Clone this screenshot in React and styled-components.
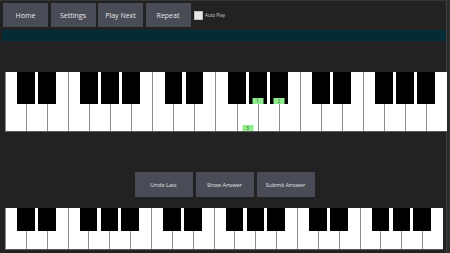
import React from "react";
import styled, { createGlobalStyle } from "styled-components";

const GlobalStyle = createGlobalStyle`
  html, body {
    margin: 0;
    padding: 0;
    background: #1c1c1c;
  }
`;

const NOTES = ["C", "D", "E", "F", "G", "A", "B"];
const HAS_SHARP = { C: true, D: true, F: true, G: true, A: true };

class App extends React.Component {
  render() {
    return (
      <>
        <GlobalStyle />
        <Window>
          <Toolbar>
            <ToolButton>Home</ToolButton>
            <ToolButton>Settings</ToolButton>
            <ToolButton>Play Next</ToolButton>
            <ToolButton>Repeat</ToolButton>
            <CheckLabel>
              <CheckBox />
              Auto Play
            </CheckLabel>
          </Toolbar>
          <StatusBar />
          <Keyboard
            height={60}
            top={31}
            rightGap={0}
            markers={{ "1:G#": "1", "1:A#": "2", "1:G": "3" }}
          />
          <ActionRow>
            <ActionButton>Undo Last</ActionButton>
            <ActionButton>Show Answer</ActionButton>
            <ActionButton>Submit Answer</ActionButton>
          </ActionRow>
          <Keyboard height={42} top={0} rightGap={4} markers={{}} />
        </Window>
      </>
    );
  }
}

const Keyboard = ({ height, top, rightGap, markers }) => {
  const keys = [];
  for (let octave = 0; octave < 3; octave++) {
    NOTES.forEach((note) => {
      const id = `${octave}:${note}`;
      const sharpId = `${octave}:${note}#`;
      keys.push(
        <WhiteKey key={id}>
          {markers[id] && <Marker>{markers[id]}</Marker>}
          {HAS_SHARP[note] && (
            <BlackKey>
              {markers[sharpId] && <Marker>{markers[sharpId]}</Marker>}
            </BlackKey>
          )}
        </WhiteKey>
      );
    });
  }
  return (
    <KeyRow $height={height} $top={top} $rightGap={rightGap}>
      {keys}
    </KeyRow>
  );
};

const Window = styled.div`
  width: 450px;
  height: 253px;
  box-sizing: border-box;
  background: #222222;
  border-top: 1px solid #353535;
  border-right: 3px solid #2c2c2c;
  box-shadow: inset -1px 0 0 #3c3c3c;
  display: flex;
  flex-direction: column;
  font-family: "Open Sans", "Noto Sans", sans-serif;
  overflow: hidden;
`;

const Toolbar = styled.div`
  display: flex;
  align-items: center;
  gap: 2.5px;
  padding: 2px 0 0 3px;
  height: 24px;
`;

const ToolButton = styled.div`
  width: 45px;
  height: 24px;
  background: #494b56;
  color: #e6e6e6;
  font-size: 7px;
  display: flex;
  align-items: center;
  justify-content: center;
`;

const CheckLabel = styled.label`
  display: flex;
  align-items: center;
  gap: 2px;
  margin-left: 1px;
  color: #cfcfcf;
  font-size: 4.6px;
`;

const CheckBox = styled.span`
  width: 9px;
  height: 9px;
  box-sizing: border-box;
  background: #e6e6e6;
  border: 1px solid #bdbdbd;
`;

const StatusBar = styled.div`
  height: 11px;
  margin: 3px 1px 0 2px;
  background: #032c36;
`;

const KeyRow = styled.div`
  display: flex;
  height: ${(p) => p.$height}px;
  margin: ${(p) => p.$top}px ${(p) => p.$rightGap}px 0 5px;
  box-sizing: border-box;
  border-left: 1px solid #8a8a8a;
  border-bottom: 1px solid #5a5a5a;
  background: #ffffff;
`;

const WhiteKey = styled.div`
  position: relative;
  flex: 1;
  background: #ffffff;
  border-right: 1px solid #8c8c8c;
  &:last-child {
    border-right: none;
  }
`;

const BlackKey = styled.div`
  position: absolute;
  top: 0;
  right: -45%;
  width: 89%;
  height: 55%;
  background: #000000;
  z-index: 2;
`;

const Marker = styled.div`
  position: absolute;
  left: 50%;
  bottom: 0;
  transform: translateX(-50%);
  width: 11px;
  height: 6px;
  background: #8fec8f;
  color: #2f5a2f;
  font-size: 4.5px;
  line-height: 6px;
  text-align: center;
  z-index: 3;
`;

const ActionRow = styled.div`
  display: flex;
  justify-content: center;
  gap: 3px;
  margin: 40px 0 11px;
  padding-left: 2px;
`;

const ActionButton = styled.div`
  width: 58px;
  height: 25px;
  background: #494b56;
  color: #e6e6e6;
  font-size: 5.6px;
  display: flex;
  align-items: center;
  justify-content: center;
`;

export default App;
